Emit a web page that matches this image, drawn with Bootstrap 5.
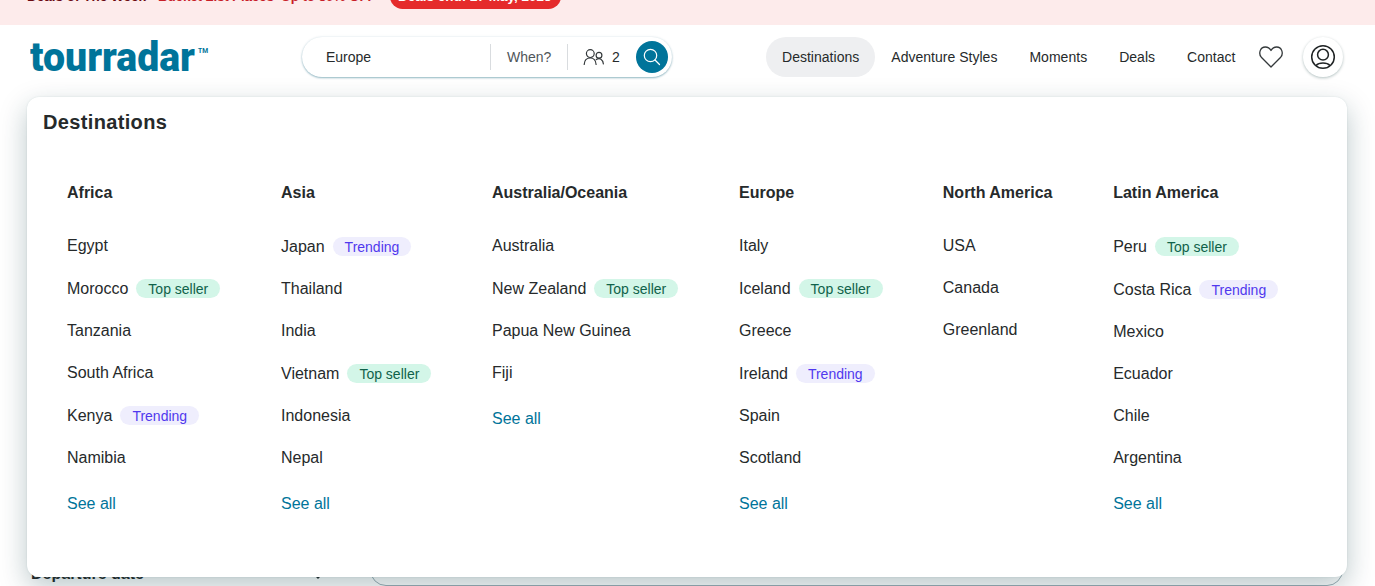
<!DOCTYPE html>
<html lang="en">
<head>
  <meta charset="UTF-8">
  <meta name="viewport" content="width=device-width, initial-scale=1.0">
  <title>TourRadar - Destinations</title>
  <link href="https://cdn.jsdelivr.net/npm/bootstrap@5.3.3/dist/css/bootstrap.min.css" rel="stylesheet">
  <style>
    body {
      font-family: "Liberation Sans", Arial, sans-serif;
      font-size: 14px;
      line-height: 18px;
      color: #262a2b;
      height: 586px;
      overflow: hidden;
    }
    a {
      color: inherit;
      text-decoration: none;
    }
    .promo-bar {
      height: 25px;
      padding: 0 0 16px 27px;
      background: #fdebeb;
      color: #c81e28;
      font-size: 13.5px;
    }
    .promo-bar span {
      padding-bottom: 3px;
    }
    .promo-title {
      width: 131px;
      color: #6b0a12;
    }
    .promo-place {
      width: 123px;
      letter-spacing: -.2px;
    }
    .promo-off {
      width: 109px;
      letter-spacing: -.1px;
    }
    .promo-bar .promo-pill {
      background: #e52b2b;
      width: 171px;
      padding: 4px 0 3px 8px;
    }
    .site-header {
      height: 64px;
      padding: 0 32px 0 30px;
    }
    .logo {
      margin-top: -3px;
    }
    .logo text {
      fill: #00749a;
    }
    .search-box {
      width: 370px;
      height: 40px;
      margin-left: 93px;
      padding: 0 4px 0 24px;
      border-radius: 20px;
      box-shadow: 0 1px 2px rgba(0, 90, 115, .4), 0 0 3px rgba(0, 90, 115, .1);
    }
    .search-where {
      width: 164px;
    }
    .search-when {
      width: 78px;
      height: 26px;
      line-height: 26px;
      padding-left: 16px;
      color: #50565a;
      border: solid #d9dcdf;
      border-width: 0 1px;
    }
    .search-people {
      width: 68px;
      padding-left: 15px;
    }
    .search-btn {
      width: 32px;
      height: 32px;
      background: #00749a;
    }
    .main-nav {
      margin-left: 94px;
    }
    .main-nav .nav-link {
      height: 40px;
      padding: 11px 16px;
      color: #262a2b;
      border-radius: 20px;
      letter-spacing: .02px;
      white-space: nowrap;
    }
    .main-nav .active {
      background: #eeeff1;
    }
    .profile-btn {
      width: 40px;
      height: 40px;
      margin-left: 20px;
      box-shadow: 0 1px 3px rgba(0, 50, 50, .3);
    }
    .mega-menu {
      top: 97px;
      left: 27px;
      width: 1320px;
      height: 480px;
      padding: 15px 16px;
      border-radius: 12px;
      box-shadow: 0 10px 28px rgba(0, 50, 58, .27), 0 0 2px rgba(0, 80, 90, .12);
    }
    .mega-menu h2 {
      font-size: 20px;
      line-height: 20px;
      letter-spacing: .35px;
      margin: 0;
    }
    .region-grid {
      display: grid;
      grid-template-columns: 214px 211px 247px 203.8px 170.4px auto;
      padding: 52px 0 0 24px;
      font-size: 16px;
      line-height: 18px;
    }
    .region-grid h3 {
      font-size: 16px;
      line-height: 18px;
      margin: 0 0 35px;
    }
    .region-grid li {
      height: 18px;
      margin-bottom: 24px;
      white-space: nowrap;
    }
    .region-grid li.tagged {
      height: 19px;
      display: flex;
      align-items: center;
    }
    .region-grid .all-link {
      color: #00749a;
      padding-top: 4px;
    }
    .tag {
      margin-left: 8px;
      padding: 1px 12px 0;
      height: 19px;
      font-size: 14px;
      line-height: 19px;
      border-radius: 10px;
    }
    .tag-top {
      background: #d3f6e8;
      color: #10624a;
    }
    .tag-trend {
      background: #efeefd;
      color: #5038ee;
    }
    .page-content {
      height: 497px;
      padding: 0 32px 0 31px;
    }
    .filter-head {
      width: 292px;
      height: 21px;
      font-size: 16px;
    }
    .tour-card {
      width: 973px;
      height: 60px;
      border: 1px solid #9eafb7;
      border-radius: 16px;
    }
  </style>
</head>
<body class="position-relative">
  <div class="promo-bar d-flex align-items-end fw-bold overflow-hidden text-nowrap">
    <span class="promo-title">Deals of The Week</span>
    <span class="promo-place">Bucket List Places</span>
    <span class="promo-off">Up to 50% OFF</span>
    <span class="promo-pill rounded-pill text-white">Deals end: 27 May, 2025</span>
  </div>

  <header class="site-header d-flex align-items-center">
    <a href="#" class="logo">
      <svg width="179" height="36" viewBox="0 0 179 36" class="d-block">
        <text y="33" font-family="Roboto, sans-serif" font-weight="900" font-size="41"><tspan x="0" textLength="165" lengthAdjust="spacingAndGlyphs">tourradar</tspan><tspan x="168" y="15" font-size="7" font-weight="700" textLength="10" lengthAdjust="spacingAndGlyphs">TM</tspan></text>
      </svg>
    </a>

    <!-- Search -->
    <div class="search-box d-flex align-items-center">
      <div class="search-where">Europe</div>
      <div class="search-when">When?</div>
      <div class="search-people d-flex align-items-center gap-2">
        <svg width="21" height="18" viewBox="0 0 21 18" fill="none" stroke="#34393b" stroke-width="1.2" stroke-linecap="round">
          <circle cx="7.3" cy="5.6" r="3.9"/>
          <path d="M1.200 16.500c.2-4 2.600-6.500 6.100-6.500s5.500 2.500 5.800 6.500"/>
          <circle cx="16" cy="7.300" r="2.900"/>
          <path d="M13.300 11.600c3.300-2.300 6.700-.3 7.100 4.400"/>
        </svg>
        <span>2</span>
      </div>
      <button class="search-btn btn rounded-circle border-0 p-0 d-flex align-items-center justify-content-center">
        <svg width="18" height="18" viewBox="0 0 18 18" fill="none" stroke="#fff" stroke-width="1.2" stroke-linecap="round">
          <circle cx="7.500" cy="7.500" r="6.200"/>
          <path d="M12 12l4.500 4.500"/>
        </svg>
      </button>
    </div>

    <nav class="main-nav nav flex-nowrap">
      <a class="nav-link active" href="#">Destinations</a>
      <a class="nav-link" href="#">Adventure Styles</a>
      <a class="nav-link" href="#">Moments</a>
      <a class="nav-link" href="#">Deals</a>
      <a class="nav-link" href="#">Contact</a>
    </nav>
    <a href="#" class="ms-2">
      <svg width="24" height="22" viewBox="0 0 24 22" fill="none" stroke="#34393b" stroke-width="1.300" stroke-linejoin="round" class="d-block">
        <path d="M12 21L2.300 11.200C-.9 7.300 1.300 1 6.300 1c2.600 0 4.600 1.500 5.700 3.500C13.100 2.500 15.100 1 17.700 1c5 0 7.200 6.300 4 10.200z"/>
      </svg>
    </a>
    <a href="#" class="profile-btn rounded-circle bg-white d-flex align-items-center justify-content-center">
      <svg width="26" height="26" viewBox="0 0 26 26" fill="none" stroke="#202425" stroke-width="1.500">
        <circle cx="13" cy="13" r="11.300"/>
        <circle cx="13" cy="10.700" r="5.400"/>
        <path d="M6 21.500c3-3.300 11-3.300 14 0"/>
      </svg>
    </a>
  </header>

  <main class="page-content d-flex align-items-end justify-content-between">
    <div class="filter-head d-flex justify-content-between fw-bold">
      <span>Departure date</span>
      <svg width="10" height="18" viewBox="0 0 10 18" fill="none" stroke="#262a2b" stroke-width="2">
        <path d="M1 8.500l4 4 4-4"/>
      </svg>
    </div>
    <div class="tour-card"></div>
  </main>

  <!-- Destinations menu -->
  <section class="mega-menu position-absolute bg-white">
    <h2 class="fw-bold">Destinations</h2>
    <div class="region-grid">
      <div>
        <h3 class="fw-bold">Africa</h3>
        <ul class="list-unstyled m-0">
          <li><a href="#">Egypt</a></li>
          <li class="tagged"><a href="#">Morocco</a><span class="tag tag-top">Top seller</span></li>
          <li><a href="#">Tanzania</a></li>
          <li><a href="#">South Africa</a></li>
          <li class="tagged"><a href="#">Kenya</a><span class="tag tag-trend">Trending</span></li>
          <li><a href="#">Namibia</a></li>
          <li class="all-link"><a href="#">See all</a></li>
        </ul>
      </div>
      <div>
        <h3 class="fw-bold">Asia</h3>
        <ul class="list-unstyled m-0">
          <li class="tagged"><a href="#">Japan</a><span class="tag tag-trend">Trending</span></li>
          <li><a href="#">Thailand</a></li>
          <li><a href="#">India</a></li>
          <li class="tagged"><a href="#">Vietnam</a><span class="tag tag-top">Top seller</span></li>
          <li><a href="#">Indonesia</a></li>
          <li><a href="#">Nepal</a></li>
          <li class="all-link"><a href="#">See all</a></li>
        </ul>
      </div>
      <div>
        <h3 class="fw-bold">Australia/Oceania</h3>
        <ul class="list-unstyled m-0">
          <li><a href="#">Australia</a></li>
          <li class="tagged"><a href="#">New Zealand</a><span class="tag tag-top">Top seller</span></li>
          <li><a href="#">Papua New Guinea</a></li>
          <li><a href="#">Fiji</a></li>
          <li class="all-link"><a href="#">See all</a></li>
        </ul>
      </div>
      <div>
        <h3 class="fw-bold">Europe</h3>
        <ul class="list-unstyled m-0">
          <li><a href="#">Italy</a></li>
          <li class="tagged"><a href="#">Iceland</a><span class="tag tag-top">Top seller</span></li>
          <li><a href="#">Greece</a></li>
          <li class="tagged"><a href="#">Ireland</a><span class="tag tag-trend">Trending</span></li>
          <li><a href="#">Spain</a></li>
          <li><a href="#">Scotland</a></li>
          <li class="all-link"><a href="#">See all</a></li>
        </ul>
      </div>
      <div>
        <h3 class="fw-bold">North America</h3>
        <ul class="list-unstyled m-0">
          <li><a href="#">USA</a></li>
          <li><a href="#">Canada</a></li>
          <li><a href="#">Greenland</a></li>
        </ul>
      </div>
      <div>
        <h3 class="fw-bold">Latin America</h3>
        <ul class="list-unstyled m-0">
          <li class="tagged"><a href="#">Peru</a><span class="tag tag-top">Top seller</span></li>
          <li class="tagged"><a href="#">Costa Rica</a><span class="tag tag-trend">Trending</span></li>
          <li><a href="#">Mexico</a></li>
          <li><a href="#">Ecuador</a></li>
          <li><a href="#">Chile</a></li>
          <li><a href="#">Argentina</a></li>
          <li class="all-link"><a href="#">See all</a></li>
        </ul>
      </div>
    </div>
  </section>

  <script src="https://cdn.jsdelivr.net/npm/bootstrap@5.3.3/dist/js/bootstrap.bundle.min.js"></script>
</body>
</html>
